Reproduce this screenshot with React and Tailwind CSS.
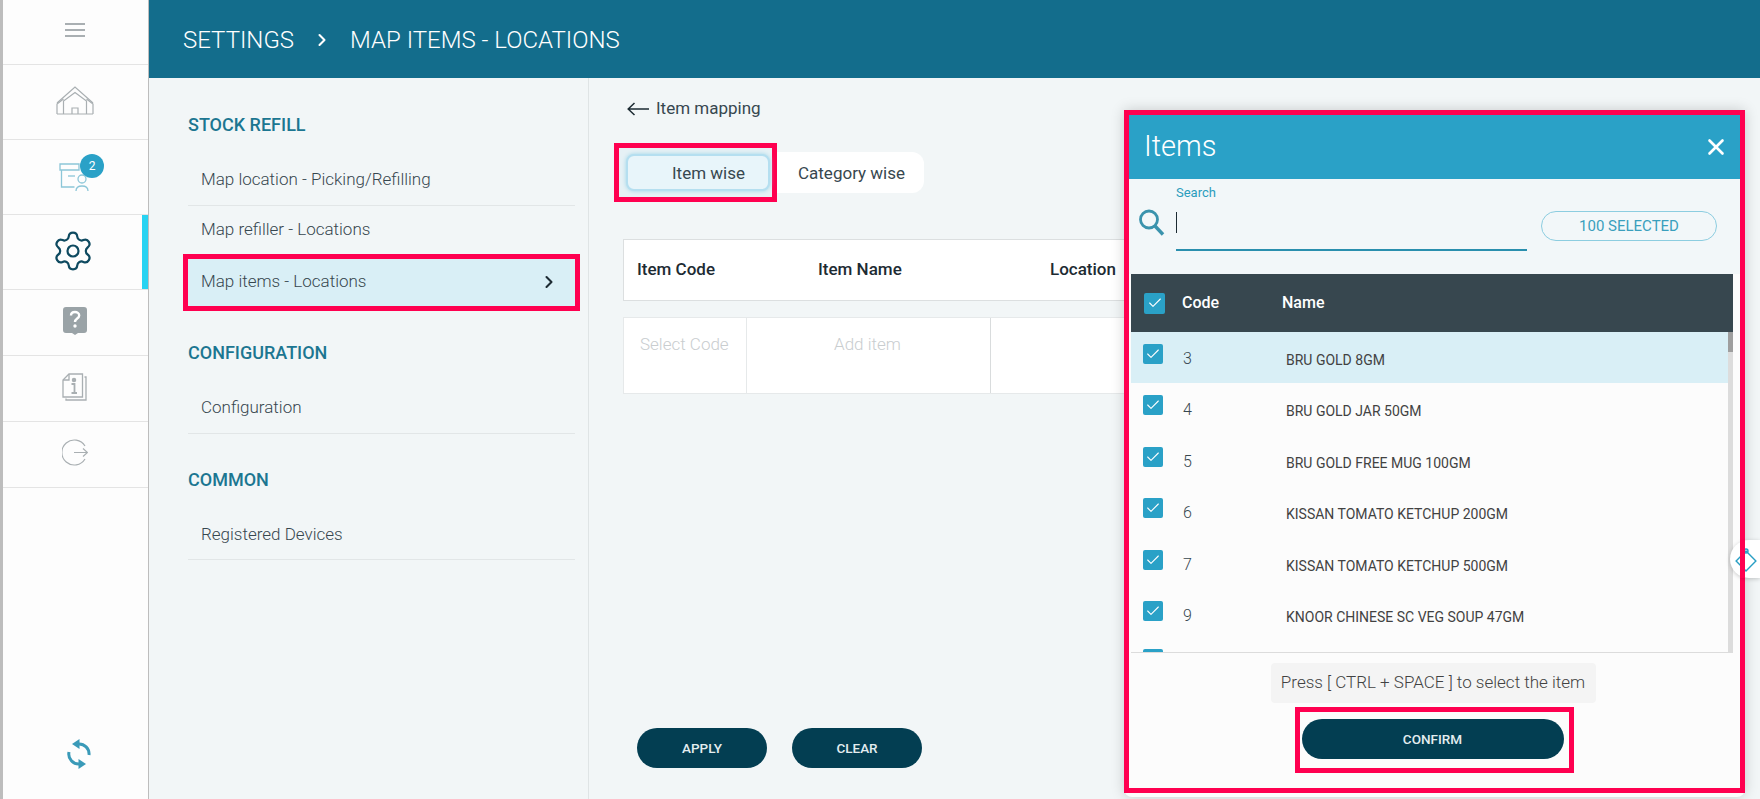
import { X, ChevronRight, Settings, Check } from 'lucide-react';

const items = [
  { code: '3', name: 'BRU GOLD 8GM', active: true },
  { code: '4', name: 'BRU GOLD JAR 50GM' },
  { code: '5', name: 'BRU GOLD FREE MUG 100GM' },
  { code: '6', name: 'KISSAN TOMATO KETCHUP 200GM' },
  { code: '7', name: 'KISSAN TOMATO KETCHUP 500GM' },
  { code: '9', name: 'KNOOR CHINESE SC VEG SOUP 47GM' },
];

const HomeIcon = () => (
  <svg width="38" height="29" viewBox="0 0 38 29" fill="none" stroke="#a9afb2" strokeWidth="1.200">
    <path d="M1 17 19 1l18 16" />
    <path d="M7.500 28V15L19 6.500 30.500 15v13" />
    <path d="M1 28V18l6.500-5M37 28V18l-6.500-5" />
    <path d="M1 28h36" />
    <path d="M16 28v-6h6v6" />
  </svg>
);

const BoxIcon = () => (
  <svg width="30" height="29" viewBox="0 0 30 29" fill="none" stroke="#8cc6d8" strokeWidth="1.300">
    <path d="M1 1h19v6H1zM2.500 7v17h13" />
    <path d="M9 13h7" />
    <circle cx="23" cy="16" r="4" />
    <path d="M17 28c0-3 2-5 6-5s6 2 6 5" />
  </svg>
);

const HelpIcon = () => (
  <svg width="24" height="28" viewBox="0 0 24 28">
    <path d="M3 0h18a3 3 0 0 1 3 3v20a3 3 0 0 1-3 3h-6l-3 2-3-2H3a3 3 0 0 1-3-3V3a3 3 0 0 1 3-3z" fill="#9aa3a7" />
    <path d="M8 8.500C8 6 10 5 12 5s4.200 1.200 4.200 3.600c0 3-4.200 3-4.200 6.400" fill="none" stroke="#fff" strokeWidth="2.400" />
    <circle cx="12" cy="19" r="1.700" fill="#fff" />
  </svg>
);

const InfoDocIcon = () => (
  <svg width="25" height="28" viewBox="0 0 25 28" fill="none" stroke="#a9afb2" strokeWidth="1.300">
    <path d="M7 1h13.500v23H1V7z" />
    <path d="M7 1v6H1" />
    <path d="M22.500 4h1.500v23H4v-1.500" />
    <circle cx="12" cy="7" r="1.600" fill="#a9afb2" />
    <path d="M9.500 11h3v8.500M9.500 20h5.500" strokeWidth="1.800" />
  </svg>
);

const LogoutIcon = () => (
  <svg width="26" height="27" viewBox="0 0 26 27" fill="none" stroke="#a9afb2" strokeWidth="1.200">
    <path d="M23 7A12.500 12.500 0 1 0 23 20" />
    <path d="M12 13.500h13.500M21 9.500l4.500 4-4.500 4" />
  </svg>
);

const SyncIcon = () => (
  <svg width="24" height="30" viewBox="0 0 24 30" fill="none" stroke="#3a9ab8" strokeWidth="3">
    <path d="M11 5a10 10 0 0 1 11 11" />
    <path d="M2 13a10 10 0 0 0 11 12" />
    <path d="M5 5l7.500-5v10z" fill="#3a9ab8" stroke="none" />
    <path d="M19 25l-7.500-5v10z" fill="#3a9ab8" stroke="none" />
  </svg>
);

const SearchIcon = () => (
  <svg width="26" height="27" viewBox="0 0 26 27" fill="none" stroke="#3a93ad" className="absolute top-[30px] left-[10px]">
    <circle cx="10" cy="10.500" r="8.500" strokeWidth="2.800" />
    <path d="M16 17l8 8.500" strokeWidth="3.400" />
  </svg>
);

const BackArrow = () => (
  <svg width="22" height="14" viewBox="0 0 22 14" fill="none" stroke="#1d2b33" strokeWidth="1.500">
    <path d="M22 7H1M7.500 1 1.200 7l6.300 6" />
  </svg>
);

const TagIcon = () => (
  <svg width="24" height="28" viewBox="0 0 24 28" fill="none" stroke="#2a9fc4" strokeWidth="1.400">
    <rect x="4" y="9" width="14" height="14" transform="rotate(45 11 16)" />
    <circle cx="11" cy="6" r="2" />
  </svg>
);

const Tick = ({ className }) => (
  <div className={`flex items-center justify-center rounded-[2px] bg-[#2aa1c7] ${className}`}>
    <Check className="h-[16px] w-[16px] text-white" strokeWidth={1.600} />
  </div>
);

const NavItem = ({ label, className }) => (
  <div className={`flex items-center border-b border-[#e2e6e7] pt-[2px] pl-[13px] text-[17px] font-light text-[#37474f] ${className}`}>
    {label}
  </div>
);

const NavHeading = ({ label, className }) => (
  <div className={`h-6 pt-[2px] text-[18px] leading-6 font-medium text-[#1c7691] ${className}`}>{label}</div>
);

const App = () => {
  return (
    <div className="relative flex h-[799px] w-[1760px] overflow-hidden bg-[#f2f6f7] font-['Roboto',sans-serif]">
      {/* left rail */}
      <aside className="flex w-[149px] shrink-0 flex-col border-r border-l-[3px] border-r-[#bdbdbd] border-l-[#bdbdbd] bg-[#fdfdfd]">
        <div className="flex h-[65px] items-center justify-center border-b border-[#e4e4e4] pr-[2px] pb-[4px]">
          <div className="flex w-5 flex-col gap-[4px]">
            <span className="h-[2px] bg-[#a9afb2]" />
            <span className="h-[2px] bg-[#a9afb2]" />
            <span className="h-[2px] bg-[#a9afb2]" />
          </div>
        </div>
        <div className="flex h-[75px] items-center justify-center border-b border-[#e4e4e4] pr-[2px] pb-[4px]">
          <HomeIcon />
        </div>
        <div className="relative flex h-[75px] items-center justify-center border-b border-[#e4e4e4] pr-[4px]">
          <BoxIcon />
          <span className="absolute left-[77px] top-[14px] flex h-6 w-6 items-center justify-center rounded-full bg-[#2aa1c7] text-[12px] text-white">2</span>
        </div>
        <div className="relative flex h-[75px] items-center justify-center border-b border-[#e4e4e4] pr-[6px] pb-[3px]">
          <Settings className="h-[44px] w-[44px] text-[#0e4a60]" strokeWidth={1.200} />
          <span className="absolute top-0 right-0 h-[74px] w-[6px] bg-[#29d3f2]" />
        </div>
        <div className="flex h-[66px] items-center justify-center border-b border-[#e4e4e4] pr-[2px] pb-[4px]">
          <HelpIcon />
        </div>
        <div className="flex h-[66px] items-center justify-center border-b border-[#e4e4e4] pr-[2px] pb-[4px]">
          <InfoDocIcon />
        </div>
        <div className="flex h-[66px] items-center justify-center border-b border-[#e4e4e4] pr-[2px] pb-[4px]">
          <LogoutIcon />
        </div>
        <div className="mt-auto flex justify-center pb-[30px] pl-[7px]">
          <SyncIcon />
        </div>
      </aside>

      <div className="flex min-w-0 flex-1 flex-col">
        <header className="flex h-[78px] shrink-0 items-center bg-[#136d8c] pt-[2px] pl-[34px] text-[24px] font-light text-white">
          <span>SETTINGS</span>
          <ChevronRight className="mx-[18px] h-[20px] w-[20px]" strokeWidth={2.500} />
          <span>MAP ITEMS - LOCATIONS</span>
        </header>

        <div className="flex min-h-0 flex-1">
          {/* settings menu */}
          <nav className="w-[440px] shrink-0 border-r border-[#dfe4e5] pt-[33px] pr-[13px] pl-[39px]">
            <NavHeading label="STOCK REFILL" />
            <NavItem label="Map location - Picking/Refilling" className="mt-[18px] h-[53px]" />
            <div className="flex h-[46px] items-center pt-[2px] pl-[13px] text-[17px] font-light text-[#37474f]">Map refiller - Locations</div>
            <div className="mt-[2px] -mr-[5px] -ml-[5px] flex h-[57px] items-center justify-between border-[5px] border-[#ff0050] bg-[#d9eff6] pr-[16px] pb-[2px] pl-[13px] text-[17px] font-light text-[#37474f]">
              Map items - Locations
              <ChevronRight className="h-[20px] w-[20px] text-[#1d2b33]" strokeWidth={2.500} />
            </div>
            <NavHeading label="CONFIGURATION" className="mt-[28px]" />
            <NavItem label="Configuration" className="mt-[18px] h-[53px]" />
            <NavHeading label="COMMON" className="mt-[32px]" />
            <NavItem label="Registered Devices" className="mt-[18px] h-[52px]" />
          </nav>

          {/* item mapping */}
          <main className="flex min-w-0 flex-1 flex-col pt-[18px] pb-[31px]">
            <div className="ml-[38px] flex h-6 items-center gap-[7px] pt-[2px] text-[17px] text-[#37474f]">
              <BackArrow />
              Item mapping
            </div>

            <div className="mt-[23px] ml-[25px] flex items-center">
              <div className="relative z-10 flex h-[59px] w-[163px] items-center justify-end border-[5px] border-[#ff0050] bg-[#e6f1f5] pr-[2px]">
                <div className="flex h-[37px] w-[144px] items-center rounded-lg border-2 border-[#b5dff0] bg-[#e8f5fa] pt-[2px] pl-[44px] text-[17px] font-normal text-[#37474f] shadow-[0_0_4px_#9fd6e8]">
                  Item wise
                </div>
              </div>
              <div className="-ml-[5px] flex h-[41px] w-[152px] items-center rounded-r-xl bg-white pt-[2px] pl-[26px] text-[17px] text-[#37474f]">
                Category wise
              </div>
            </div>

            <div className="mt-[37px] ml-[34px] flex h-[62px] w-[520px] shrink-0 items-center border border-[#dcdfe0] bg-white text-[17px] font-medium text-[#1d2b33]">
              <span className="w-[194px] pl-[13px]">Item Code</span>
              <span className="w-[232px]">Item Name</span>
              <span>Location</span>
            </div>

            <div className="mt-[16px] ml-[34px] flex h-[77px] w-[520px] shrink-0 border border-[#e6e9ea] bg-white text-[17px] font-light text-[#c9cdcf]">
              <div className="w-[123px] border-r border-[#e6e9ea] pt-[14px] pl-[16px]">Select Code</div>
              <div className="w-[244px] border-r border-[#d9dcdd] pt-[14px] pl-[87px]">Add item</div>
            </div>

            <div className="mt-auto ml-[48px] flex gap-[25px]">
              <button className="h-[40px] w-[130px] rounded-full bg-[#033e52] text-[13.500px] font-medium text-[#e4edf0]">APPLY</button>
              <button className="h-[40px] w-[130px] rounded-full bg-[#033e52] text-[13.500px] font-medium text-[#e4edf0]">CLEAR</button>
            </div>
          </main>
        </div>
      </div>

      {/* items drawer */}
      <div className="absolute top-[110px] left-[1124px] z-20 flex h-[687px] w-[621px] flex-col rounded-b-lg bg-[#fcfcfc] px-[5px] pt-[5px] shadow-[0_0_14px_rgba(0,0,0,0.18)]">
        <div className="flex h-[64px] shrink-0 items-center justify-between bg-[#2aa1c7] pr-[11px] pl-[15px] text-white">
          <span className="text-[29px] font-light">Items</span>
          <X className="h-[26px] w-[26px]" strokeWidth={2.400} />
        </div>

        <div className="relative h-[95px] shrink-0 bg-[#f2f7f9]">
          <span className="absolute top-[4px] left-[47px] text-[13px] text-[#2a9dbd]">Search</span>
          <SearchIcon />
          <div className="absolute top-[33px] left-[47px] h-[21px] w-px bg-[#1d2b33]" />
          <div className="absolute top-[70px] left-[47px] h-[2px] w-[351px] bg-[#2a8fae]" />
          <div className="absolute top-[32px] left-[412px] flex h-[30px] w-[176px] items-center justify-center rounded-full border border-[#8ccde0] text-[15px] text-[#3a9fbd]">
            100 SELECTED
          </div>
        </div>

        <div className="mr-[7px] ml-[2px] flex h-[58px] shrink-0 items-center bg-[#37474f] pl-[13px] text-[16px] font-medium text-white">
          <Tick className="h-[21px] w-[21px]" />
          <span className="ml-[17px] w-[100px]">Code</span>
          <span>Name</span>
        </div>

        <div className="relative mr-[7px] ml-[2px] h-[321px] shrink-0 overflow-hidden border-b border-[#dcdcdc]">
          {items.map((item) => (
            <div key={item.code} className={`mr-[5px] flex h-[51.400px] ${item.active ? 'bg-[#d9eff6]' : ''}`}>
              <Tick className="mt-[12px] ml-[12px] h-[20px] w-[20px]" />
              <span className="ml-[20px] w-[103px] pt-[15px] text-[16px] font-light text-[#37474f]">{item.code}</span>
              <span className="pt-[18px] text-[14px] text-[#424242]">{item.name}</span>
            </div>
          ))}
          <Tick className="mt-[9px] ml-[12px] h-[20px] w-[20px]" />
          <div className="absolute top-0 right-0 h-full w-[5px] bg-[#dcdcdc]">
            <div className="h-[20px] bg-[#9e9e9e]" />
          </div>
        </div>

        <div className="mt-[10px] flex justify-center pr-[3px]">
          <div className="flex h-[40px] w-[325px] items-center justify-center rounded bg-[#f4f4f4] text-[17px] font-light text-[#424242]">
            Press [ CTRL + SPACE ] to select the item
          </div>
        </div>
        <div className="mt-[4px] flex justify-center">
          <div className="flex h-[66px] w-[279px] items-center justify-center border-[5px] border-[#ff0050] pr-[4px] pb-[2px]">
            <button className="h-[40px] w-[262px] rounded-full bg-[#033e52] text-[13.500px] font-medium text-[#e4edf0]">CONFIRM</button>
          </div>
        </div>

        {/* annotation frame */}
        <div className="pointer-events-none absolute top-0 left-0 z-20 h-[683px] w-full border-[5px] border-[#ff0050]" />
      </div>

      {/* floating tab */}
      <div className="absolute top-[540px] left-[1730px] z-30 flex h-[38px] w-[30px] items-center rounded-l-[19px] bg-white pl-[5px] shadow-[0_1px_4px_rgba(0,0,0,0.2)]">
        <TagIcon />
      </div>
      <div className="absolute top-[540px] left-[1740px] z-30 h-[38px] w-[5px] bg-[#ff0050]" />
    </div>
  );
};

export default App;
